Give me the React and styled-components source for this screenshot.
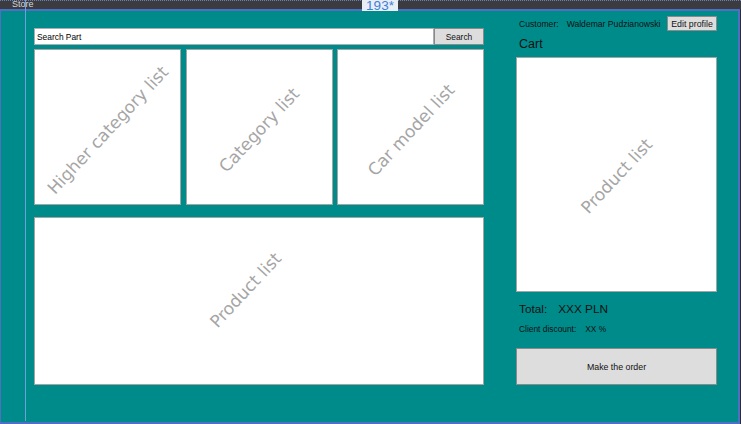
import React from "react";
import styled, { createGlobalStyle } from "styled-components";

const Global = createGlobalStyle`
  html, body { margin: 0; padding: 0; background: #2d2d30; }
  body { font-family: "Segoe UI", "Liberation Sans", Arial, sans-serif; }
  * { box-sizing: border-box; }
`;

const Screen = styled.div`
  position: relative;
  width: 741px;
  height: 424px;
  overflow: hidden;
  display: flex;
  flex-direction: column;
  background: #2d2d30;
`;

const DesignerBar = styled.div`
  position: relative;
  height: 9px;
  flex: none;
  background: #3b3b40;
  border-top: 1px dotted #6b82b8;
  display: flex;
  align-items: flex-end;
  padding-left: 12px;
`;

const BarTitle = styled.span`
  font-size: 9px;
  line-height: 9px;
  color: #d6d6d6;
`;

const SizeTag = styled.div`
  position: absolute;
  left: 362px;
  top: -1px;
  width: 36px;
  height: 11px;
  background: #e9eef6;
  color: #3f80d8;
  font-size: 13.5px;
  line-height: 11px;
  display: flex;
  align-items: center;
  justify-content: center;
  z-index: 2;
`;

const Window = styled.div`
  flex: 1;
  width: 740px;
  background: #008b8b;
  border-style: solid;
  border-color: #4f6fc4;
  border-width: 2px 2px 2px 1px;
  display: flex;
  align-items: flex-start;
  padding: 5px 21px 0 33px;
  gap: 32px;
`;

const LeftColumn = styled.div`
  width: 450px;
  margin-top: 12px;
  display: flex;
  flex-direction: column;
`;

const SearchRow = styled.div`
  display: flex;
  height: 17px;
`;

const SearchInput = styled.div`
  flex: 1;
  background: #fff;
  border: 1px solid #abadb3;
  font-size: 8.4px;
  color: #000;
  display: flex;
  align-items: center;
  padding-left: 2px;
`;

const Button = styled.div`
  background: #dddddd;
  border: 1px solid #8a8a8a;
  color: #111;
  font-size: ${(p) => p.$size || 8.6}px;
  display: flex;
  align-items: center;
  justify-content: center;
  width: ${(p) => (p.$width ? `${p.$width}px` : "auto")};
  height: ${(p) => p.$height}px;
  flex: none;
`;

const ListGrid = styled.div`
  margin-top: 4px;
  height: 156px;
  display: grid;
  grid-template-columns: repeat(3, minmax(0, 1fr));
  column-gap: 4.5px;
`;

const ListBox = styled.div`
  background: #fff;
  border: 1px solid #a4a4a4;
  height: ${(p) => (p.$height ? `${p.$height}px` : "100%")};
  margin-top: ${(p) => p.$top || 0}px;
  overflow: hidden;
  display: flex;
  align-items: center;
  justify-content: center;
  min-width: 0;
`;

const Watermark = styled.span`
  flex: none;
  font-family: "DejaVu Sans", Verdana, sans-serif;
  font-size: 17px;
  color: #a5a5a5;
  white-space: nowrap;
  transform: translate(${(p) => p.$dx || 0}px, ${(p) => p.$dy || 3}px) rotate(-47deg);
`;

const RightColumn = styled.div`
  width: 201px;
  display: flex;
  flex-direction: column;
`;

const CustomerRow = styled.div`
  height: 15px;
  display: flex;
  align-items: center;
  padding-left: 3px;
  font-size: 8.6px;
  color: #111;
`;

const Label = styled.span`
  margin-right: ${(p) => p.$gap || 0}px;
`;

const EditSlot = styled.div`
  margin-left: auto;
`;

const CartTitle = styled.div`
  height: 26px;
  display: flex;
  align-items: center;
  padding-left: 3px;
  font-size: 12.5px;
  color: #111;
`;

const InfoRow = styled.div`
  display: flex;
  align-items: center;
  padding-left: 3px;
  margin-top: ${(p) => p.$top}px;
  height: ${(p) => p.$height}px;
  font-size: ${(p) => p.$size}px;
  color: #111;
`;

const OrderButton = styled(Button)`
  margin-top: 11px;
`;

const GuideLine = styled.div`
  position: absolute;
  left: 25px;
  top: 0;
  width: 1px;
  height: 421px;
  background: #6e9fe2;
`;

export default function App() {
  return (
    <>
      <Global />
      <Screen>
        <DesignerBar>
          <BarTitle>Store</BarTitle>
          <SizeTag>193*</SizeTag>
        </DesignerBar>
        <Window>
          <LeftColumn>
            <SearchRow>
              <SearchInput>Search Part</SearchInput>
              <Button $width={50} $height={17} $size={8.4}>Search</Button>
            </SearchRow>
            <ListGrid>
              <ListBox><Watermark>Higher category list</Watermark></ListBox>
              <ListBox><Watermark>Category list</Watermark></ListBox>
              <ListBox><Watermark>Car model list</Watermark></ListBox>
            </ListGrid>
            <ListBox $height={168} $top={12}>
              <Watermark $dx={-14} $dy={-11}>Product list</Watermark>
            </ListBox>
          </LeftColumn>
          <RightColumn>
            <CustomerRow>
              <Label $gap={8}>Customer:</Label>
              <Label>Waldemar Pudzianowski</Label>
              <EditSlot>
                <Button $width={50} $height={15} $size={8.8}>Edit profile</Button>
              </EditSlot>
            </CustomerRow>
            <CartTitle>Cart</CartTitle>
            <ListBox $height={235}>
              <Watermark $dy={1}>Product list</Watermark>
            </ListBox>
            <InfoRow $top={8} $height={17} $size={11.8}>
              <Label $gap={11}>Total:</Label>
              <Label>XXX PLN</Label>
            </InfoRow>
            <InfoRow $top={4} $height={16} $size={8.4}>
              <Label $gap={9}>Client discount:</Label>
              <Label>XX %</Label>
            </InfoRow>
            <OrderButton $height={37} $size={8.8}>Make the order</OrderButton>
          </RightColumn>
        </Window>
        <GuideLine />
      </Screen>
    </>
  );
}
